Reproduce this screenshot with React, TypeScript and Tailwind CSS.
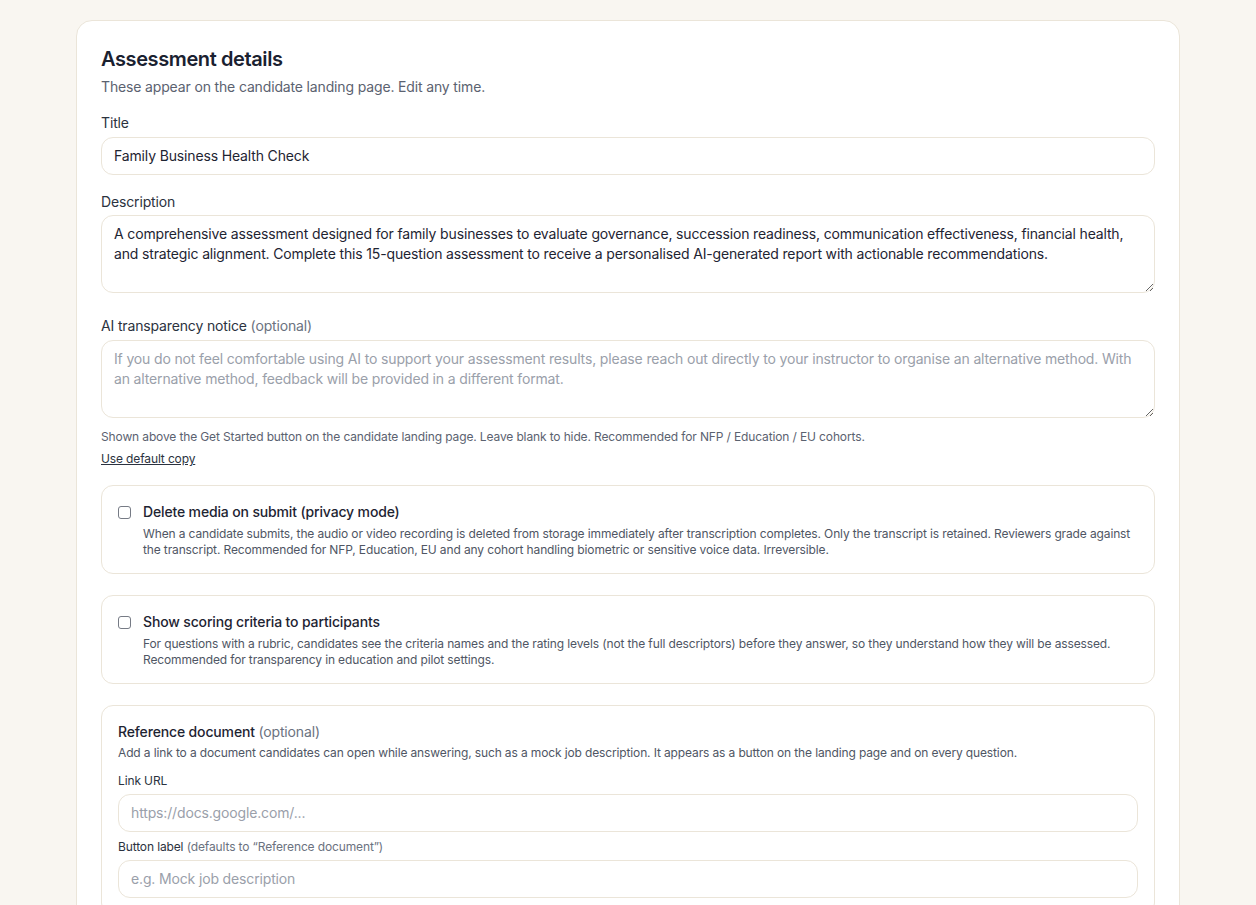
import React from 'react';

const inputBase =
  'block w-full rounded-xl border border-[#ebe5d9] bg-white px-3 py-2 text-sm text-[#1e2432] placeholder:text-[#9aa0aa] outline-none';

const CheckCard: React.FC<{ title: string; children: React.ReactNode }> = ({ title, children }) => (
  <div className="rounded-xl border border-[#ebe5d9] px-4 pt-4 pb-[15px]">
    <label className="flex items-start gap-3">
      <span className="mt-[3.5px] h-[13px] w-[13px] shrink-0 rounded-[3px] border border-[#767b85] bg-white" />
      <span>
        <span className="block text-sm font-medium leading-5 text-[#1e2432]">{title}</span>
        <span className="mt-1 block text-xs leading-4 tracking-[-0.13px] text-[#4f5664]">{children}</span>
      </span>
    </label>
  </div>
);

export default function App() {
  return (
    <div className="min-h-screen bg-[#f9f6f1] pt-5 font-['Inter',sans-serif] tracking-[-0.15px] text-[#1e2432]">
      <div className="mx-auto w-[1104px] rounded-2xl border border-[#ebe5d9] bg-white p-6 pb-10">
        {/* Header */}
        <h2 className="text-xl font-semibold leading-7 tracking-[-0.4px] text-[#1a2130]">Assessment details</h2>
        <p className="mt-1 text-sm leading-5 text-[#5b6270]">
          These appear on the candidate landing page. Edit any time.
        </p>

        {/* Title */}
        <div className="mt-4">
          <label className="block text-sm leading-5 text-[#2b3240]">Title</label>
          <input className={`mt-1 ${inputBase}`} defaultValue="Family Business Health Check" />
        </div>

        {/* Description */}
        <div className="mt-[17px]">
          <label className="block text-sm leading-5 text-[#2b3240]">Description</label>
          <textarea
            rows={3}
            className={`mt-[3px] ${inputBase} leading-5`}
            defaultValue="A comprehensive assessment designed for family businesses to evaluate governance, succession readiness, communication effectiveness, financial health, and strategic alignment. Complete this 15-question assessment to receive a personalised AI-generated report with actionable recommendations."
          />
        </div>

        {/* AI notice */}
        <div className="mt-[23px]">
          <label className="block text-sm leading-5 text-[#2b3240]">
            AI transparency notice <span className="text-[#6b7280]">(optional)</span>
          </label>
          <textarea
            rows={3}
            className={`mt-1 ${inputBase} leading-5`}
            placeholder="If you do not feel comfortable using AI to support your assessment results, please reach out directly to your instructor to organise an alternative method. With an alternative method, feedback will be provided in a different format."
          />
          <p className="mt-[11px] text-xs leading-4 tracking-[-0.13px] text-[#5b6270]">
            Shown above the Get Started button on the candidate landing page. Leave blank to hide. Recommended for NFP / Education / EU cohorts.
          </p>
          <button className="mt-1 text-xs leading-4 tracking-[-0.13px] text-[#2b3240] underline">Use default copy</button>
        </div>

        {/* Toggles */}
        <div className="mt-4 space-y-[21px]">
          <CheckCard title="Delete media on submit (privacy mode)">
            When a candidate submits, the audio or video recording is deleted from storage immediately after transcription completes. Only the transcript is retained. Reviewers grade against the transcript. Recommended for NFP, Education, EU and any cohort handling biometric or sensitive voice data. Irreversible.
          </CheckCard>
          <CheckCard title="Show scoring criteria to participants">
            For questions with a rubric, candidates see the criteria names and the rating levels (not the full descriptors) before they answer, so they understand how they will be assessed. Recommended for transparency in education and pilot settings.
          </CheckCard>

          {/* Reference document */}
          <div className="rounded-xl border border-[#ebe5d9] p-4">
            <p className="text-sm font-medium leading-5 text-[#1e2432]">
              Reference document <span className="font-normal text-[#6b7280]">(optional)</span>
            </p>
            <p className="mt-[3px] text-xs leading-4 tracking-[-0.13px] text-[#4f5664]">
              Add a link to a document candidates can open while answering, such as a mock job description. It appears as a button on the landing page and on every question.
            </p>
            <label className="mt-3 block text-xs leading-4 tracking-[-0.13px] text-[#2b3240]">Link URL</label>
            <input className={`mt-[5px] ${inputBase}`} placeholder="https://docs.google.com/..." />
            <label className="mt-[7px] block text-xs leading-4 tracking-[-0.13px] text-[#2b3240]">
              Button label <span className="text-[#6b7280]">(defaults to “Reference document”)</span>
            </label>
            <input className={`mt-[5px] ${inputBase}`} placeholder="e.g. Mock job description" />
          </div>
        </div>
      </div>
    </div>
  );
}
